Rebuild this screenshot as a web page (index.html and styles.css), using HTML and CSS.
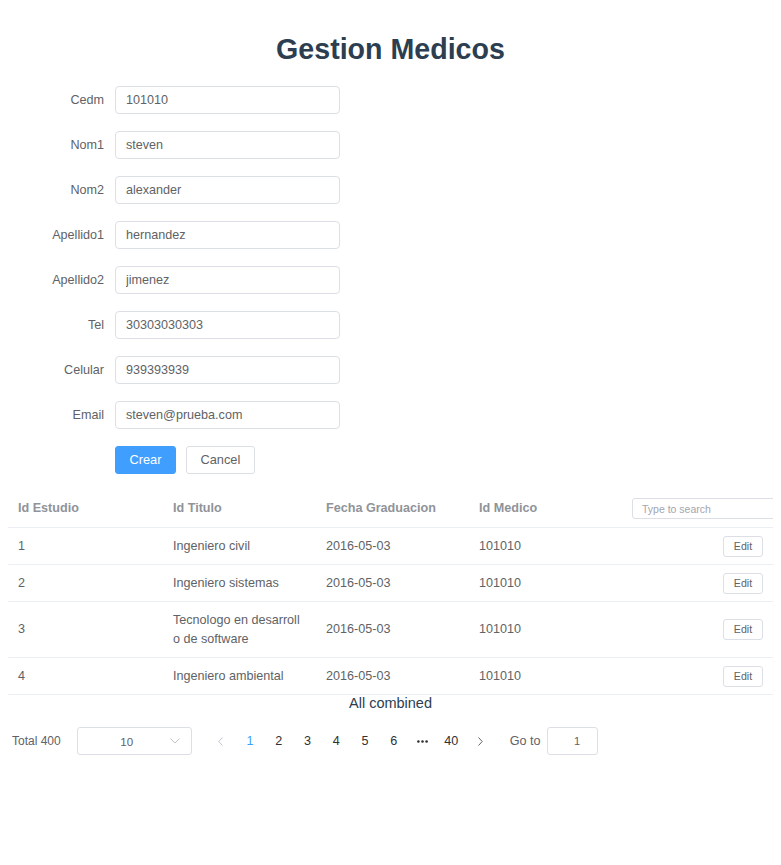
FILE: index.html
```html
<!DOCTYPE html>
<html lang="es">
<head>
<meta charset="utf-8">
<title>Gestion Medicos</title>
<link rel="stylesheet" href="styles.css">
</head>
<body>
<div class="app">
  <h1 class="title">Gestion Medicos</h1>

  <form class="form">
    <div class="form-item"><label class="form-label">Cedm</label><input class="input" type="text" value="101010"></div>
    <div class="form-item"><label class="form-label">Nom1</label><input class="input" type="text" value="steven"></div>
    <div class="form-item"><label class="form-label">Nom2</label><input class="input" type="text" value="alexander"></div>
    <div class="form-item"><label class="form-label">Apellido1</label><input class="input" type="text" value="hernandez"></div>
    <div class="form-item"><label class="form-label">Apellido2</label><input class="input" type="text" value="jimenez"></div>
    <div class="form-item"><label class="form-label">Tel</label><input class="input" type="text" value="30303030303"></div>
    <div class="form-item"><label class="form-label">Celular</label><input class="input" type="text" value="939393939"></div>
    <div class="form-item"><label class="form-label">Email</label><input class="input" type="text" value="steven@prueba.com"></div>
    <div class="form-item form-actions">
      <span class="form-label"></span>
      <button type="button" class="btn btn-primary">Crear</button>
      <button type="button" class="btn">Cancel</button>
    </div>
  </form>

  <div class="table">
    <div class="tr thead">
      <div class="td">Id Estudio</div>
      <div class="td">Id Titulo</div>
      <div class="td">Fecha Graduacion</div>
      <div class="td">Id Medico</div>
      <div class="td td-search"><input class="search" type="text" placeholder="Type to search"></div>
    </div>
    <div class="tr">
      <div class="td">1</div>
      <div class="td">Ingeniero civil</div>
      <div class="td">2016-05-03</div>
      <div class="td">101010</div>
      <div class="td td-action"><button type="button" class="btn-edit">Edit</button></div>
    </div>
    <div class="tr">
      <div class="td">2</div>
      <div class="td">Ingeniero sistemas</div>
      <div class="td">2016-05-03</div>
      <div class="td">101010</div>
      <div class="td td-action"><button type="button" class="btn-edit">Edit</button></div>
    </div>
    <div class="tr">
      <div class="td">3</div>
      <div class="td">Tecnologo en desarrollo de software</div>
      <div class="td">2016-05-03</div>
      <div class="td">101010</div>
      <div class="td td-action"><button type="button" class="btn-edit">Edit</button></div>
    </div>
    <div class="tr">
      <div class="td">4</div>
      <div class="td">Ingeniero ambiental</div>
      <div class="td">2016-05-03</div>
      <div class="td">101010</div>
      <div class="td td-action"><button type="button" class="btn-edit">Edit</button></div>
    </div>
  </div>

  <div class="combined">All combined</div>

  <div class="pagination">
    <span class="total">Total 400</span>
    <div class="sizes">
      <span class="sizes-value">10</span>
      <svg class="sizes-arrow" width="10" height="6" viewBox="0 0 10 6"><path d="M0.5 0.5 L5 5 L9.5 0.5" fill="none" stroke="#c0c4cc" stroke-width="1"/></svg>
    </div>
    <button type="button" class="pg-btn pg-prev" disabled>
      <svg width="5" height="9" viewBox="0 0 5 9"><path d="M4.5 0.5 L0.8 4.5 L4.5 8.5" fill="none" stroke="#c0c4cc" stroke-width="1"/></svg>
    </button>
    <ul class="pager">
      <li class="active">1</li>
      <li>2</li>
      <li>3</li>
      <li>4</li>
      <li>5</li>
      <li>6</li>
      <li class="more"><svg width="11" height="3" viewBox="0 0 11 3"><circle cx="1.4" cy="1.5" r="1.3" fill="#303133"/><circle cx="5.5" cy="1.5" r="1.3" fill="#303133"/><circle cx="9.6" cy="1.5" r="1.3" fill="#303133"/></svg></li>
      <li>40</li>
    </ul>
    <button type="button" class="pg-btn pg-next">
      <svg width="5" height="9" viewBox="0 0 5 9"><path d="M0.5 0.5 L4.2 4.5 L0.5 8.5" fill="none" stroke="#606266" stroke-width="1"/></svg>
    </button>
    <span class="jump">Go to</span>
    <input class="jump-input" type="text" value="1">
  </div>
</div>
</body>
</html>
```

FILE: styles.css
```css
html, body {
  overflow-x: hidden;
}

body {
  margin: 8px;
  background: #fff;
  font-family: "Liberation Sans", Arial, sans-serif;
  color: #606266;
}

.title {
  margin: 24px 0 0;
  font-size: 28.6px;
  line-height: 34px;
  font-weight: 700;
  color: #2c3e50;
  text-align: center;
}

/* form */
.form {
  margin: 20px 0 16px;
}

.form-item {
  display: flex;
  align-items: center;
  height: 28px;
  margin-bottom: 17px;
}

.form-actions {
  margin-bottom: 0;
}

.form-label {
  box-sizing: border-box;
  width: 107px;
  flex: none;
  padding-right: 11px;
  text-align: right;
  font-size: 12.6px;
  line-height: 28px;
  color: #606266;
}

.input {
  box-sizing: border-box;
  width: 225px;
  height: 28px;
  padding: 0 10px;
  border: 1px solid #dcdfe6;
  border-radius: 4px;
  font-family: "Liberation Sans", Arial, sans-serif;
  font-size: 12.6px;
  color: #606266;
  background: #fff;
  outline: none;
}

.btn {
  box-sizing: border-box;
  height: 28px;
  padding: 0 13.5px;
  border: 1px solid #dcdfe6;
  border-radius: 3px;
  background: #fff;
  color: #606266;
  font-family: "Liberation Sans", Arial, sans-serif;
  font-size: 12.8px;
  line-height: 26px;
  cursor: pointer;
}

.btn + .btn {
  margin-left: 10px;
}

.btn-primary {
  background: #409eff;
  border-color: #409eff;
  color: #fff;
  padding: 0 13.5px;
}

/* table */
.table {
  width: 766px;
  margin-left: -1px;
  overflow: hidden;
  font-size: 12.6px;
  color: #606266;
}

.tr {
  display: grid;
  grid-template-columns: 156px 153px 153px 153px 151px;
  border-bottom: 1px solid #ebeef5;
}

.td {
  box-sizing: border-box;
  padding: 8.5px 10px;
  line-height: 19px;
  word-break: break-all;
  display: flex;
  align-items: center;
  min-width: 0;
}

.tr .td:first-child {
  padding-left: 11px;
}

.thead .td {
  padding-top: 9px;
  padding-bottom: 9px;
  font-weight: 700;
  color: #909399;
}

.thead .td-search,
.td-action {
  padding-top: 0;
  padding-bottom: 0;
}

.td-search {
  overflow: visible;
}

.search {
  box-sizing: border-box;
  flex: none;
  width: 180px;
  height: 21px;
  padding: 0 9px;
  border: 1px solid #dcdfe6;
  border-radius: 3px;
  font-family: "Liberation Sans", Arial, sans-serif;
  font-size: 10.5px;
  color: #606266;
  outline: none;
}

.search::placeholder {
  color: #a3a6ad;
}

.td-action {
  justify-content: flex-end;
}

.btn-edit {
  box-sizing: border-box;
  width: 40px;
  height: 21px;
  padding: 0;
  border: 1px solid #dcdfe6;
  border-radius: 3px;
  background: #fff;
  color: #606266;
  font-family: "Liberation Sans", Arial, sans-serif;
  font-size: 10.6px;
  line-height: 19px;
  text-align: center;
}

.combined {
  text-align: center;
  font-size: 14.5px;
  line-height: 17px;
  color: #2c3e50;
}

/* pagination */
.pagination {
  display: flex;
  align-items: center;
  height: 28px;
  margin-top: 15px;
  padding-left: 4px;
  color: #303133;
}

.total {
  font-size: 12px;
  color: #606266;
  margin-right: 16px;
}

.sizes {
  box-sizing: border-box;
  width: 115px;
  height: 28px;
  border: 1px solid #dcdfe6;
  border-radius: 3px;
  display: flex;
  align-items: center;
  padding-right: 14px;
  margin-right: 14px;
}

.sizes-value {
  flex: 1;
  text-align: center;
  font-size: 11.6px;
  color: #606266;
}

.sizes-arrow {
  display: block;
  margin-left: -6px;
  margin-right: -3px;
}

.pg-btn {
  width: 30px;
  height: 28px;
  padding: 0;
  border: 0;
  background: transparent;
  display: flex;
  align-items: center;
  justify-content: center;
}

.pg-btn svg {
  display: block;
}

.pager {
  display: flex;
  margin: 0;
  padding: 0;
  list-style: none;
}

.pager li {
  width: 28.75px;
  height: 28px;
  line-height: 28px;
  text-align: center;
  font-size: 12.6px;
  color: #303133;
  display: flex;
  align-items: center;
  justify-content: center;
}

.pager li.active {
  color: #409eff;
}

.jump {
  margin-left: 14px;
  margin-right: 6px;
  font-size: 12.6px;
  color: #606266;
}

.jump-input {
  box-sizing: border-box;
  width: 51px;
  height: 28px;
  padding: 0 0 0 10px;
  border: 1px solid #dcdfe6;
  border-radius: 3px;
  text-align: center;
  font-family: "Liberation Sans", Arial, sans-serif;
  font-size: 11px;
  color: #606266;
  outline: none;
}
```
